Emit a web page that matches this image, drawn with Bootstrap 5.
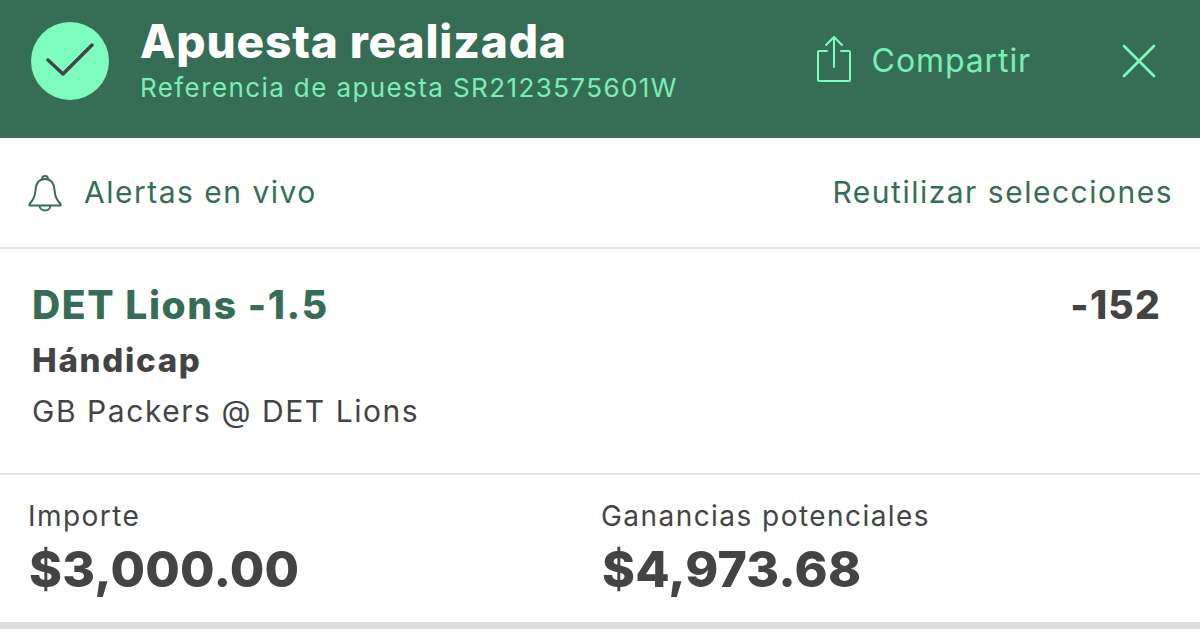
<!DOCTYPE html>
<html lang="es">
<head>
  <meta charset="UTF-8" />
  <meta name="viewport" content="width=device-width, initial-scale=1.0" />
  <title>Apuesta realizada</title>
  <link href="https://cdn.jsdelivr.net/npm/bootstrap@5.3.0/dist/css/bootstrap.min.css" rel="stylesheet" />
  <style>
    body {
      background-color: #dcdcdc;
      font-family: Inter, "Liberation Sans", sans-serif;
      color: #444;
      height: 629px;
      overflow: hidden;
    }
    .bet-header {
      height: 138px;
      background: #366e55;
      padding: 0 44px 19px 31px;
    }
    .check-circle {
      width: 78px;
      height: 78px;
      border-radius: 50%;
      background: #7dfcbd;
      margin: 3px 31px 0 0;
    }
    .bet-title {
      font-size: 46px;
      font-weight: 800;
      letter-spacing: .85px;
      color: #fff;
      line-height: 50px;
      margin-bottom: 6px;
    }
    .bet-ref {
      font-size: 26px;
      line-height: 32px;
      letter-spacing: 1.4px;
      color: #78f0b5;
    }
    .share-group {
      margin-top: 3px;
    }
    .share-icon {
      margin-bottom: 4px;
    }
    .share-text {
      font-size: 32px;
      letter-spacing: .9px;
      color: #78f0b5;
      margin: 0 91px 0 21px;
    }
    .alerts-row {
      height: 111px;
      background: #fff;
      border-bottom: 2px solid #e4e4e4;
      padding: 0 27px 0 28px;
      color: #366e55;
      font-size: 30px;
      letter-spacing: 1.5px;
    }
    .bell-text {
      margin-left: 22px;
    }
    .selection-row {
      height: 226px;
      background: #fff;
      border-bottom: 2px solid #e4e4e4;
      padding: 30px 39px 0 32px;
    }
    .sel-name {
      font-size: 39px;
      font-weight: 800;
      letter-spacing: 1.6px;
      color: #366e55;
      line-height: 52px;
    }
    .sel-price {
      font-size: 39px;
      font-weight: 800;
      letter-spacing: 1.2px;
      line-height: 52px;
    }
    .sel-market {
      font-size: 33px;
      font-weight: 800;
      letter-spacing: 1.7px;
      line-height: 54px;
      margin-top: 2px;
    }
    .sel-match {
      font-size: 30px;
      letter-spacing: 1.55px;
      line-height: 50px;
      margin-top: -1px;
    }
    .totals-row {
      height: 147px;
      background: #fff;
      padding: 21px 28px 0;
    }
    .total-col {
      width: 573px;
    }
    .total-label {
      font-size: 28px;
      letter-spacing: 1.45px;
      line-height: 40px;
    }
    .total-value {
      font-size: 50px;
      font-weight: 800;
      letter-spacing: .2px;
      line-height: 66px;
      margin-left: 1px;
    }
  </style>
</head>
<body>
  <div class="bet-header d-flex align-items-center">
    <div class="check-circle d-flex align-items-center justify-content-center flex-shrink-0">
      <svg width="48" height="38" viewBox="0 0 48 38" fill="none" stroke="#444" stroke-width="3.4" stroke-linecap="round" stroke-linejoin="round"><path d="M2 18 L17 32 L46 3" /></svg>
    </div>
    <div class="flex-grow-1">
      <div class="bet-title">Apuesta realizada</div>
      <div class="bet-ref">Referencia de apuesta SR2123575601W</div>
    </div>
    <div class="share-group d-flex align-items-center">
      <svg class="share-icon" width="34" height="46" viewBox="0 0 34 46" fill="none" stroke="#7dfcbd" stroke-width="2" stroke-linecap="round" stroke-linejoin="round"><path d="M10 15 H2 a1 1 0 0 0 -1 1 V44 a1 1 0 0 0 1 1 H32 a1 1 0 0 0 1 -1 V16 a1 1 0 0 0 -1 -1 H24" /><path d="M17 31 V2 M9 9 L17 1 L25 9" /></svg>
      <span class="share-text">Compartir</span>
      <svg width="34" height="34" viewBox="0 0 34 34" fill="none" stroke="#7dfcbd" stroke-width="2.6" stroke-linecap="round"><path d="M2 2 L32 32 M32 2 L2 32" /></svg>
    </div>
  </div>

  <div class="alerts-row d-flex align-items-center justify-content-between">
    <div class="d-flex align-items-center">
      <svg width="34" height="38" viewBox="0 0 34 38" fill="none" stroke="#366e55" stroke-width="2" stroke-linejoin="round"><path d="M17 5 C10 5 8 10 7.500 16 C7 22 6 25 1.500 30 V31.500 H32.500 V30 C28 25 27 22 26.500 16 C26 10 24 5 17 5 Z" /><path d="M14 5 C14 1 20 1 20 5" /><path d="M11.500 31.500 C12 38 22 38 22.500 31.500" /></svg>
      <span class="bell-text">Alertas en vivo</span>
    </div>
    <span>Reutilizar selecciones</span>
  </div>

  <div class="selection-row">
    <div class="d-flex justify-content-between">
      <div class="sel-name">DET Lions -1.5</div>
      <div class="sel-price">-152</div>
    </div>
    <div class="sel-market">Hándicap</div>
    <div class="sel-match">GB Packers @ DET Lions</div>
  </div>

  <div class="totals-row d-flex">
    <div class="total-col">
      <div class="total-label">Importe</div>
      <div class="total-value">$3,000.00</div>
    </div>
    <div>
      <div class="total-label">Ganancias potenciales</div>
      <div class="total-value">$4,973.68</div>
    </div>
  </div>

  <script src="https://cdn.jsdelivr.net/npm/bootstrap@5.3.0/dist/js/bootstrap.bundle.min.js"></script>
</body>
</html>
